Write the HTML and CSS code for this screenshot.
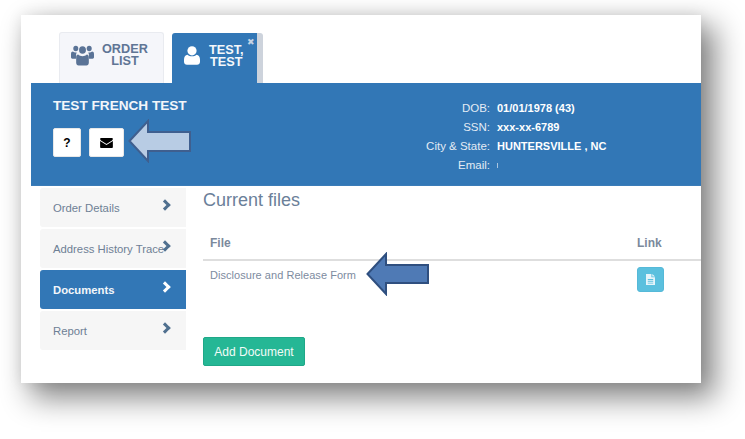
FILE: index.html
```html
<!DOCTYPE html>
<html lang="en">
<head>
<meta charset="utf-8">
<title>Documents</title>
<link rel="stylesheet" href="styles.css">
</head>
<body>
<div class="card">
  <div class="tabs">
    <div class="tab tab-list">
      <svg class="ic-users" viewBox="0 0 24 20" width="23" height="21" preserveAspectRatio="none"><g fill="#5a7396"><circle cx="5" cy="3.400" r="2.600"/><circle cx="19" cy="3.400" r="2.600"/><circle cx="12" cy="4.800" r="3.600"/><path d="M0 8.500c0-1.600 1-2.300 2-2.300 1 .9 2.400 1.300 4 .9-.5 1-.8 2-.8 3.200v2.700H1.500C.5 13 0 12.500 0 11.500zM24 8.500c0-1.600-1-2.300-2-2.300-1 .9-2.400 1.300-4 .9.500 1 .8 2 .8 3.200v2.700h3.700c1 0 1.500-.5 1.500-1.500z"/><path d="M7.500 9c1 .9 2.800 1.600 4.500 1.600S15.500 9.900 16.500 9c1.300 0 2.100 1 2.100 2.500v5.500c0 1.500-1 2.500-2.500 2.500H7.900c-1.500 0-2.500-1-2.500-2.500v-5.500C5.400 10 6.200 9 7.500 9z"/></g></svg>
      <span class="tab-text">ORDER<br>LIST</span>
    </div>
    <div class="tab tab-active">
      <svg class="ic-user" viewBox="0 0 16 19" width="16" height="19"><g fill="#fff"><circle cx="8" cy="4.800" r="4.600"/><path d="M3.500 8.800c1.200 1 2.800 1.500 4.500 1.500s3.300-.5 4.500-1.500c2.200.3 3.500 2.200 3.500 5v2c0 1.700-1.300 3-3 3H3c-1.700 0-3-1.300-3-3v-2c0-2.800 1.300-4.700 3.500-5z"/></g></svg>
      <span class="tab-text">TEST,<br>TEST</span>
      <span class="tab-close">✖</span>
    </div>
  </div>

  <header class="banner">
    <div class="banner-left">
      <h1 class="name">TEST FRENCH TEST</h1>
      <div class="actions">
        <button class="btn-white btn-help">?</button>
        <button class="btn-white btn-mail">
          <svg viewBox="0 0 14 11" width="13" height="10"><path fill="#000" d="M1.200 0h11.600C13.500 0 14 .5 14 1.200c0 .6-.4 1.100-.9 1.500L7 6.500.9 2.700C.4 2.300 0 1.800 0 1.200 0 .5.500 0 1.200 0zM0 3.400l7 4.400 7-4.400v6.400c0 .7-.5 1.200-1.200 1.200H1.200C.5 11 0 10.500 0 9.800z"/></svg>
        </button>
      </div>
    </div>
    <dl class="info">
      <dt>DOB:</dt><dd>01/01/1978 (43)</dd>
      <dt>SSN:</dt><dd>xxx-xx-6789</dd>
      <dt>City &amp; State:</dt><dd>HUNTERSVILLE , NC</dd>
      <dt>Email:</dt><dd class="email-mark"></dd>
    </dl>
  </header>

  <div class="body">
    <nav class="side">
      <a class="side-item">Order Details<span class="chev"></span></a>
      <a class="side-item">Address History Trace<span class="chev"></span></a>
      <a class="side-item is-active">Documents<span class="chev"></span></a>
      <a class="side-item">Report<span class="chev"></span></a>
    </nav>
    <main class="main">
      <h2 class="title">Current files</h2>
      <div class="thead"><span>File</span><span class="col-link">Link</span></div>
      <div class="trow">
        <span>Disclosure and Release Form</span>
        <span class="col-link">
          <button class="btn-doc">
            <svg viewBox="0 0 10 12" width="9" height="11"><path fill="#e6f4fa" fill-rule="evenodd" d="M0 0h6v3.500h4V12H0zM7 0l3 2.600H7zM2 5.500v1h6v-1zM2 7.500v1h6v-1zM2 9.500v1h6v-1z"/></svg>
          </button>
        </span>
      </div>
      <button class="btn-add">Add Document</button>
    </main>
  </div>

  <svg class="arrow arrow-a" viewBox="0 0 64 44" width="64" height="44"><path fill="#b8cce4" stroke="#3f5f8f" stroke-width="2" d="M1.500 22 20 2v11h42v19H20v10z"/></svg>
  <svg class="arrow arrow-b" viewBox="0 0 64 44" width="64" height="44"><path fill="#4f7ab5" stroke="#2f4f7f" stroke-width="2" d="M1.500 22 20 2v11h42v18H20v11z"/></svg>
</div>
</body>
</html>
```

FILE: styles.css
```css
* { box-sizing: border-box; }
html, body { margin: 0; height: 100%; background: #fff; overflow: hidden; }
body { font-family: "Liberation Sans", Arial, sans-serif; }

.card {
  position: relative;
  width: 680px;
  height: 368px;
  margin: 15px 0 0 21px;
  padding: 17px 0 0 10px;
  background: #fff;
  box-shadow: 0 0 14px rgba(0,0,0,.08), 12px 13px 28px 2px rgba(0,0,0,.48);
}

.tabs { display: flex; gap: 8px; height: 51px; padding-left: 28px; }
.tab { display: flex; align-items: center; border-radius: 3px 3px 0 0; }
.tab-text { font-size: 12.700px; font-weight: 700; line-height: 12px; text-align: center; }
.tab-list {
  width: 105px;
  gap: 8px;
  padding: 0 0 6px 11px;
  background: #f5f6fa;
  border: 1px solid #e9ebf0;
  border-bottom: 0;
  color: #5f7595;
}
.tab-active {
  position: relative;
  width: 91px;
  margin-top: 1px;
  gap: 9px;
  padding: 0 0 5px 12px;
  background: #3277b6;
  border-right: 6px solid #cdd3dc;
  color: #f4f7fb;
}
.tab-close { position: absolute; top: 4px; right: 2px; font-size: 9px; line-height: 10px; color: #c5d3e4; }

.banner {
  display: flex;
  height: 103px;
  background: #3277b6;
  color: #fff;
  border-bottom: 1px solid #3b7cb8;
}
.banner-left { width: 395px; padding: 15px 0 0 22px; }
.name { margin: 0; font-size: 13.600px; line-height: 16px; font-weight: 700; color: #f3f6fa; }
.actions { display: flex; gap: 8px; margin-top: 14px; }
.btn-white {
  display: flex;
  align-items: center;
  justify-content: center;
  height: 29px;
  padding: 0;
  background: #fff;
  border: 1px solid #e8e8e8;
  border-radius: 2px;
  font: 700 12px "Liberation Sans", Arial, sans-serif;
  color: #000;
}
.btn-help { width: 28px; }
.btn-mail { width: 35px; }

.info {
  display: grid;
  grid-template-columns: 64px auto;
  grid-auto-rows: 19px;
  column-gap: 7px;
  align-content: start;
  margin: 16px 0 0;
  font-size: 11.500px;
  line-height: 19px;
  width: 260px;
}
.info dt { text-align: right; color: #e3ebf4; white-space: nowrap; justify-self: end; }
.info dd { margin: 0; font-size: 11px; font-weight: 700; white-space: nowrap; }
.email-mark { position: relative; }
.email-mark::before {
  content: "";
  position: absolute;
  left: 0;
  top: 7px;
  width: 1px;
  height: 5px;
  background: #a9c5e0;
}

.body { display: flex; height: 197px; }
.side { display: flex; flex-direction: column; gap: 2px; width: 146px; margin: 2px 0 0 9px; }
.side-item {
  position: relative;
  display: flex;
  align-items: center;
  height: 39px;
  padding: 0 0 0 13px;
  background: #f6f6f6;
  border-radius: 3px 0 0 3px;
  font-size: 11.300px;
  color: #6e7f95;
  white-space: nowrap;
}
.side-item.is-active { background: #3277b6; color: #f3f6fa; font-weight: 700; }
.chev {
  position: absolute;
  left: 121px;
  top: 13px;
  width: 8px;
  height: 8px;
  border-top: 3px solid #50708f;
  border-right: 3px solid #50708f;
  transform: rotate(45deg);
}
.is-active .chev { border-color: #fff; }

.main { flex: 1; margin-left: 17px; min-width: 0; }
.title { margin: 4px 0 0; font-size: 18px; line-height: 20px; font-weight: 400; color: #6b8099; }
.thead {
  display: flex;
  justify-content: space-between;
  height: 51px;
  padding: 26px 0 0 7px;
  font-size: 12px;
  line-height: 15px;
  font-weight: 700;
  color: #7b899c;
  border-bottom: 2px solid #dedede;
}
.trow {
  display: flex;
  justify-content: space-between;
  height: 76px;
  padding: 7px 0 0 7px;
  font-size: 11px;
  line-height: 15px;
  letter-spacing: .04px;
  color: #7d8ba0;
}
.col-link { width: 64px; flex: none; }
.btn-doc {
  display: flex;
  align-items: center;
  justify-content: center;
  width: 27px;
  height: 25px;
  margin-top: -1px;
  padding: 0;
  background: #5bc0de;
  border: 1px solid #55b9d8;
  border-radius: 3px;
}
.btn-add {
  width: 102px;
  height: 29px;
  padding: 0;
  background: #25b795;
  border: 1px solid #1fa888;
  border-radius: 2px;
  font: 12px "Liberation Sans", Arial, sans-serif;
  color: #f2fbf8;
}

.arrow { position: absolute; }
.arrow-a { left: 107px; top: 104px; }
.arrow-b { left: 345px; top: 237px; }
```
